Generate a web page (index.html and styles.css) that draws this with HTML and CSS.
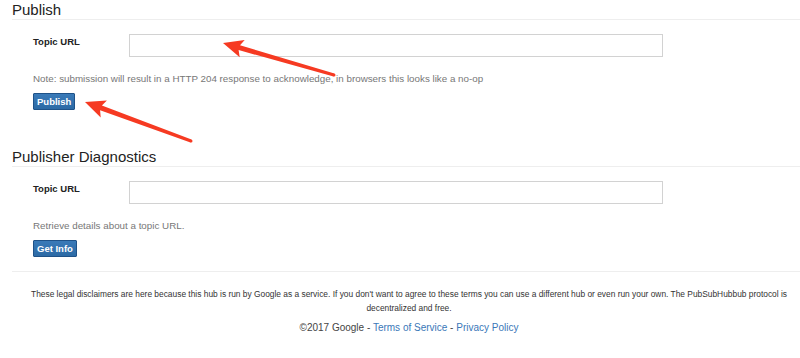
FILE: index.html
```html
<!DOCTYPE html>
<html>
<head>
<meta charset="utf-8">
<title>Publish</title>
<link rel="stylesheet" href="styles.css">
</head>
<body>
<div class="page">
  <section class="section">
    <h2 class="heading">Publish</h2>
    <div class="row">
      <label class="label">Topic URL</label>
      <input class="field" type="text">
    </div>
    <p class="note">Note: submission will result in a HTTP 204 response to acknowledge, in browsers this looks like a no-op</p>
    <button class="btn">Publish</button>
  </section>
  <section class="section second">
    <h2 class="heading">Publisher Diagnostics</h2>
    <div class="row">
      <label class="label">Topic URL</label>
      <input class="field" type="text">
    </div>
    <p class="note">Retrieve details about a topic URL.</p>
    <button class="btn">Get Info</button>
  </section>
  <footer class="footer">
    <p class="legal">These legal disclaimers are here because this hub is run by Google as a service. If you don't want to agree to these terms you can use a different hub or even run your own. The PubSubHubbub protocol is decentralized and free.</p>
    <p class="copy">©2017 Google - <a href="#">Terms of Service</a> - <a href="#">Privacy Policy</a></p>
  </footer>
</div>
<svg class="arrows" width="800" height="358" viewBox="0 0 800 358">
  <path d="M223,43 L244.7,39.9 L240.0,45.3 L334.4,73.6 L333.6,76.4 L238.6,50.1 L239.7,57.2 Z" fill="#f63a22"/>
  <circle cx="334" cy="75" r="1.5" fill="#f63a22"/>
  <path d="M85,102 L106.9,100.5 L101.9,105.6 L191.5,139.6 L190.5,142.4 L100.1,110.2 L100.7,117.4 Z" fill="#f63a22"/>
  <circle cx="191" cy="141" r="1.5" fill="#f63a22"/>
</svg>
</body>
</html>
```

FILE: styles.css
```css
html, body {
  margin: 0;
  padding: 0;
  background: #fff;
}
body {
  font-family: "Liberation Sans", Arial, Helvetica, sans-serif;
  color: #333;
  width: 800px;
  height: 358px;
  overflow: hidden;
  position: relative;
}
.page {
  padding-left: 12px;
}
.section {
  display: flex;
  flex-direction: column;
  align-items: flex-start;
}
.second {
  margin-top: 37px;
}
.heading {
  align-self: stretch;
  margin: 0;
  padding: 1px 0 1px;
  font-size: 15px;
  line-height: 17px;
  font-weight: normal;
  color: #222;
  border-bottom: 1px solid #eeeeee;
}
.row {
  display: flex;
  align-items: flex-start;
  margin-top: 14px;
  margin-left: 21px;
}
.label {
  width: 96px;
  padding-top: 2px;
  font-size: 9.5px;
  line-height: 12px;
  font-weight: bold;
  color: #222;
}
.field {
  box-sizing: border-box;
  width: 534px;
  height: 23px;
  margin: 0;
  border: 1px solid #d2d2d2;
  border-radius: 0;
  background: #fff;
}
.note {
  margin: 16px 0 0 21px;
  font-size: 9.8px;
  line-height: 12px;
  color: #777;
}
.btn {
  margin: 8px 0 0 21px;
  box-sizing: border-box;
  height: 17px;
  padding: 0 3px;
  font-family: "Liberation Sans", Arial, sans-serif;
  font-size: 9.5px;
  font-weight: bold;
  line-height: 15px;
  color: #fff;
  background: linear-gradient(#3a7ab8, #2c6aa5);
  border: 1px solid #1f5288;
  border-radius: 1px;
}
.footer {
  margin-top: 14px;
  border-top: 1px solid #eeeeee;
  padding-left: 6px;
  text-align: center;
}
.legal {
  margin: 15px 0 0;
  font-size: 8.4px;
  line-height: 14px;
  color: #333;
}
.copy {
  margin: 6px 0 0;
  font-size: 10px;
  line-height: 14px;
  color: #444;
}
.copy a {
  color: #3a77b8;
  text-decoration: none;
}
.arrows {
  position: absolute;
  top: 0;
  left: 0;
  pointer-events: none;
}
```
